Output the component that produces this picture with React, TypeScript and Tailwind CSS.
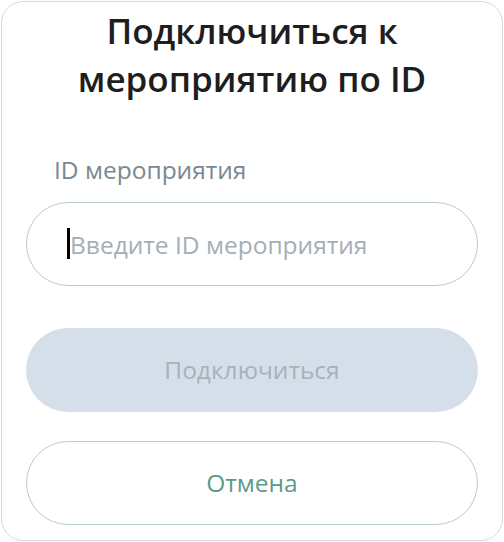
import React from "react";

export default function App() {
  return (
    <div
      className="w-[504px] h-[542px] bg-white"
      style={{ fontFamily: '"Open Sans", "Noto Sans", sans-serif' }}
    >
      <div className="h-[540px] w-[502px] ml-px mt-px rounded-[22px] border border-[#d6d8da] bg-white px-6 flex flex-col">
        <h1 className="mt-[5px] text-center text-[35px] leading-[48px] font-semibold text-[#1e1e1e]">
          Подключиться к
          <br />
          мероприятию по ID
        </h1>

        <label
          htmlFor="event-id"
          className="mt-[52px] ml-7 text-[24.5px] leading-[30px] text-[#7a8891]"
        >
          ID мероприятия
        </label>

        <div className="relative mt-[17px]">
          <input
            id="event-id"
            type="text"
            placeholder="Введите ID мероприятия"
            className="w-full h-[84px] rounded-full border border-[#b9cbca] bg-white pl-[43px] pr-6 text-[24.5px] text-[#1e1e1e] placeholder:text-[#a4aeb7] caret-transparent outline-none"
          />
          <span className="absolute left-[41px] top-[26px] w-[3px] h-[31px] bg-black" />
        </div>

        <button
          type="button"
          disabled
          className="mt-[42px] h-[84px] w-full rounded-full bg-[#d5dfea] text-[24.5px] text-[#a6b1bd]"
        >
          Подключиться
        </button>

        <button
          type="button"
          className="mt-[29px] h-[84px] w-full rounded-full border border-[#b9cbca] bg-white text-[24.5px] text-[#5b9a8b]"
        >
          Отмена
        </button>
      </div>
    </div>
  );
}
